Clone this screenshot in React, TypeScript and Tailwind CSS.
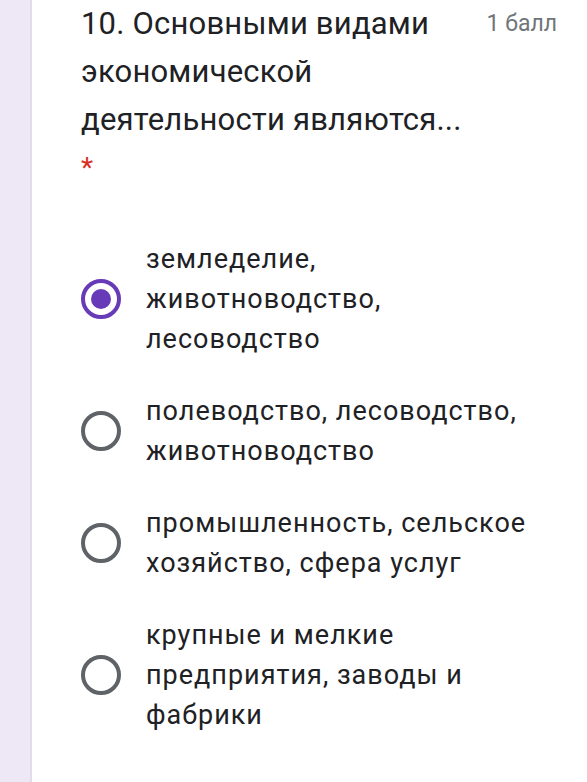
import React from "react";

const options = [
  { lines: "земледелие, животноводство, лесоводство", checked: true },
  { lines: "полеводство, лесоводство, животноводство", checked: false },
  { lines: "промышленность, сельское хозяйство, сфера услуг", checked: false },
  { lines: "крупные и мелкие предприятия, заводы и фабрики", checked: false },
];

function Radio({ checked }: { checked: boolean }) {
  return checked ? (
    <div className="w-[40px] h-[40px] rounded-full border-[4px] border-[#673ab7] flex items-center justify-center shrink-0">
      <div className="w-[20px] h-[20px] rounded-full bg-[#673ab7]" />
    </div>
  ) : (
    <div className="w-[40px] h-[40px] rounded-full border-[4px] border-[#5f6368] shrink-0" />
  );
}

export default function App() {
  return (
    <div className="flex w-[587px] h-[782px] bg-white overflow-hidden">
      <div className="w-[32px] shrink-0 bg-[#ede7f6] border-r-[2px] border-[#e0dde6]" />
      <div className="flex-1 pl-[49px] pr-[30px]">
        <div className="flex justify-between">
          <div
            className="w-[400px] text-[31px] leading-[48px] text-[#202124] tracking-[0.2px]"
            style={{ fontFamily: "Roboto, sans-serif" }}
          >
            10. Основными видами экономической деятельности являются...
            <div className="text-[#d93025] text-[28px] leading-[48px]">*</div>
          </div>
          <div
            className="text-[23px] leading-[48px] text-[#70757a] whitespace-nowrap"
            style={{ fontFamily: "Roboto, sans-serif" }}
          >
            1 балл
          </div>
        </div>
        <div className="mt-[47px] flex flex-col gap-[32px]">
          {options.map((o, i) => (
            <div key={i} className="flex items-center">
              <Radio checked={o.checked} />
              <div
                className="ml-[25px] w-[400px] text-[27px] leading-[40px] text-[#202124] tracking-[1px]"
                style={{ fontFamily: "Roboto, sans-serif" }}
              >
                {o.lines}
              </div>
            </div>
          ))}
        </div>
      </div>
    </div>
  );
}
